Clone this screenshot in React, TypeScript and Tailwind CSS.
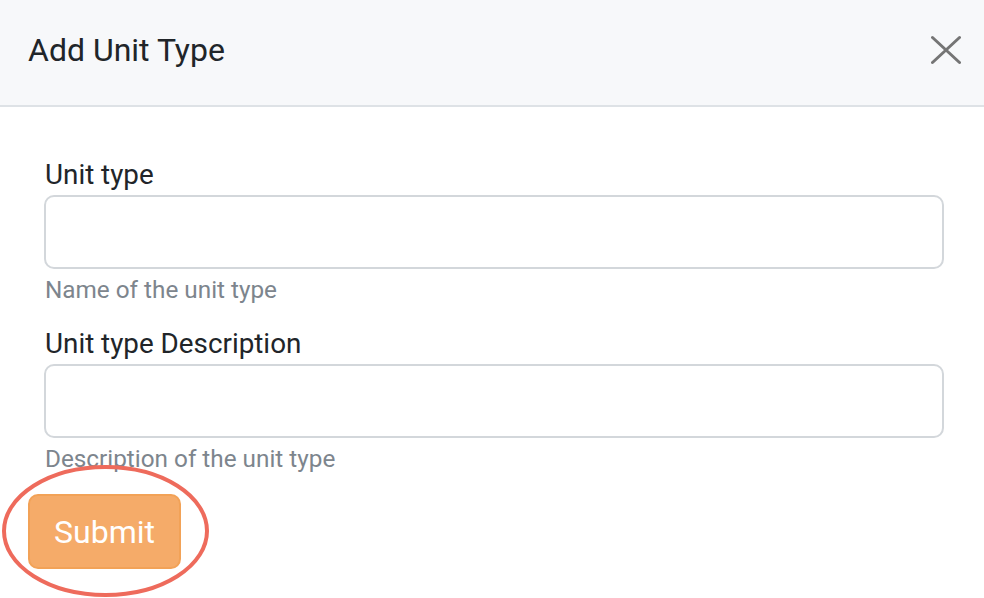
import React from 'react';

function Field({ label, help }: { label: string; help: string }) {
  return (
    <div className="flex flex-col">
      <label className="text-[27.8px] leading-[36px] text-[#212529] pl-px">{label}</label>
      <input
        type="text"
        className="mt-[2px] h-[74px] w-full rounded-[10px] border-2 border-[#d3d7db] bg-white px-4 outline-none"
      />
      <div className="mt-[6px] text-[24.3px] leading-[30px] text-[#7d858d] pl-px">{help}</div>
    </div>
  );
}

export default function App() {
  return (
    <div className="relative h-[598px] w-[984px] overflow-hidden bg-white font-['Roboto',_'Liberation_Sans',_sans-serif]">
      {/* Header */}
      <div className="flex h-[107px] items-center justify-between border-b-2 border-[#dee2e6] bg-[#f7f8fa] pb-[5px] pl-[28px] pr-[18px]">
        <h1 className="text-[32px] leading-[40px] text-[#212529]">Add Unit Type</h1>
        <button className="flex h-[40px] w-[40px] items-center justify-center">
          <svg width="30" height="30" viewBox="0 0 30 30" fill="none">
            <path d="M1.5 2.5 L28.5 27.5 M28.5 2.5 L1.5 27.5" stroke="#757575" strokeWidth="3" strokeLinecap="round" />
          </svg>
        </button>
      </div>

      {/* Body */}
      <div className="pt-[50px] pl-[44px] pr-[40px]">
        <div className="flex flex-col gap-[21px]">
          <Field label="Unit type" help="Name of the unit type" />
          <Field label="Unit type Description" help="Description of the unit type" />
        </div>
      </div>

      <div className="pl-[28px] pt-[20px]">
        <button className="h-[75px] w-[153px] rounded-[10px] border-2 border-[#f2a257] bg-[#f5ab69] text-[32px] text-white">
          Submit
        </button>
      </div>

      {/* annotation ellipse */}
      <svg className="pointer-events-none absolute left-0 top-0" width="984" height="598">
        <ellipse cx="105.5" cy="531" rx="101.5" ry="64" fill="none" stroke="#ee6b5c" strokeWidth="4" />
      </svg>
    </div>
  );
}
